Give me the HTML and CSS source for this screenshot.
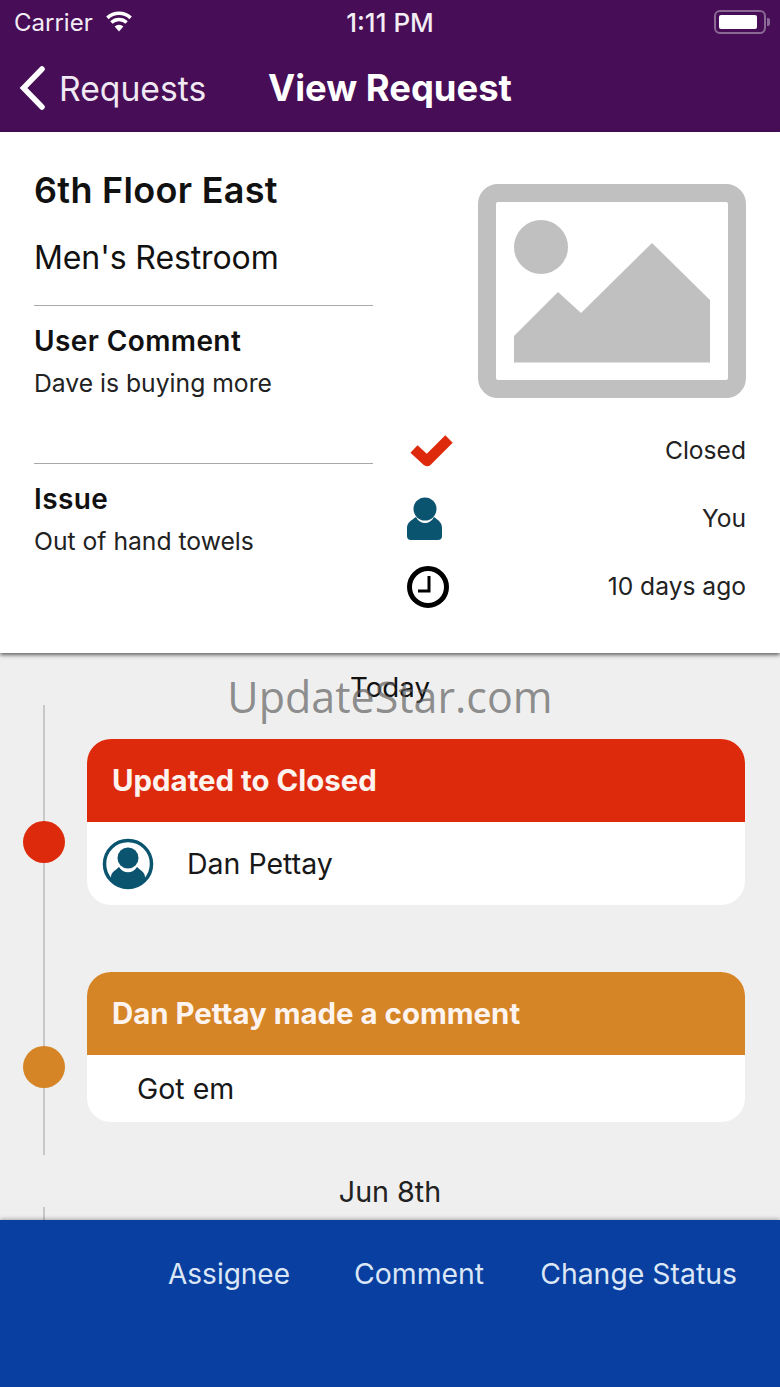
FILE: index.html
```html
<!DOCTYPE html>
<html>
  <head>
    <meta charset="utf-8">
    <title>View Request</title>
    <link rel="stylesheet" href="styles.css">
  </head>
  <body>
    <div class="phone">
      <header class="top">
        <div class="status-bar">
          <div class="carrier">
            Carrier
            <svg class="wifi" width="28" height="22" viewBox="0 0 28 22">
              <path d="M14 21.5 L9.6 16.4 A6.6 6.6 0 0 1 18.4 16.4 Z" fill="#fff"/>
              <path d="M6.4 12.4 A11.2 11.2 0 0 1 21.6 12.4" fill="none" stroke="#fff" stroke-width="3.4"/>
              <path d="M2.4 7.8 A17.2 17.2 0 0 1 25.6 7.8" fill="none" stroke="#fff" stroke-width="3.6"/>
            </svg>
          </div>
          <div class="clock">1:11 PM</div>
          <div class="battery"><span class="battery-level"></span></div>
        </div>
        <nav class="nav">
          <div class="back">
            <svg width="28" height="44" viewBox="0 0 28 44">
              <path d="M24 3 L5.5 22 L24 41" fill="none" stroke="#fff" stroke-width="5.5" stroke-linecap="round" stroke-linejoin="miter"/>
            </svg>
            <span>Requests</span>
          </div>
          <div class="nav-title">View Request</div>
        </nav>
      </header>

      <section class="details">
        <div class="details-left">
          <h1 class="place">6th Floor East</h1>
          <div class="room">Men's Restroom</div>
          <div class="info info-comment">
            <div class="info-label">User Comment</div>
            <div class="info-text">Dave is buying more</div>
          </div>
          <div class="info">
            <div class="info-label">Issue</div>
            <div class="info-text">Out of hand towels</div>
          </div>
        </div>
        <div class="details-right">
          <svg class="photo" width="268" height="214" viewBox="0 0 268 214">
            <rect x="9" y="9" width="250" height="196" rx="11" fill="none" stroke="#c0c0c0" stroke-width="18"/>
            <circle cx="63" cy="63" r="27" fill="#c0c0c0"/>
            <path d="M36 152 L80 108 L103 129 L174 59 L232 116 L232 178.5 L36 178.5 Z" fill="#c0c0c0"/>
          </svg>
          <div class="meta meta-status">
            <svg width="50" height="40" viewBox="0 0 50 40">
              <path d="M8 19 L21 31 L43 9" fill="none" stroke="#de2a0c" stroke-width="10.5" stroke-linejoin="round"/>
            </svg>
            <span>Closed</span>
          </div>
          <div class="meta">
            <svg width="46" height="46" viewBox="0 0 46 46">
              <circle cx="19" cy="14" r="11.5" fill="#0b5470"/>
              <path d="M1 41 L1 33 C1 27 6 25 10 22 C14 30 24 30 28 22 C32 25 36 27 36 33 L36 41 Q36 45 32 45 L5 45 Q1 45 1 41 Z" fill="#0b5470"/>
            </svg>
            <span>You</span>
          </div>
          <div class="meta">
            <svg width="46" height="44" viewBox="0 0 46 44">
              <circle cx="22" cy="23" r="18.5" fill="none" stroke="#000" stroke-width="5"/>
              <path d="M23 12 L23 27 L12 27" fill="none" stroke="#000" stroke-width="3"/>
            </svg>
            <span>10 days ago</span>
          </div>
        </div>
      </section>

      <main class="timeline">
        <div class="date date-today">Today</div>
        <div class="rail">
          <div class="event event-closed">
            <span class="dot"></span>
            <div class="event-head">Updated to Closed</div>
            <div class="event-body event-user">
              <svg width="52" height="52" viewBox="0 0 52 52">
                <defs><clipPath id="avatar"><circle cx="26" cy="26" r="23"/></clipPath></defs>
                <circle cx="26" cy="26" r="23.5" fill="#fff" stroke="#0b5470" stroke-width="3.5"/>
                <circle cx="26" cy="20" r="10.5" fill="#0b5470"/>
                <path d="M9 52 L9 39 C9 34 14 32 17 29 C21 36 31 36 35 29 C38 32 43 34 43 39 L43 52 Z" fill="#0b5470" clip-path="url(#avatar)"/>
              </svg>
              <span>Dan Pettay</span>
            </div>
          </div>
          <div class="event event-comment">
            <span class="dot"></span>
            <div class="event-head">Dan Pettay made a comment</div>
            <div class="event-body event-note">Got em</div>
          </div>
        </div>
        <div class="date">Jun 8th</div>
        <div class="rail rail-next"></div>
      </main>

      <footer class="actions">
        <span class="action-first">Assignee</span>
        <span>Comment</span>
        <span>Change Status</span>
      </footer>

      <div class="watermark">UpdateStar.com</div>
    </div>
  </body>
</html>
```

FILE: styles.css
```css
* {
  box-sizing: border-box;
}

html,
body {
  margin: 0;
  padding: 0;
}

body {
  font-family: Inter, "Noto Sans", sans-serif;
  color: #111;
}

.phone {
  position: relative;
  width: 780px;
  height: 1387px;
  display: flex;
  flex-direction: column;
  overflow: hidden;
  background: #efefef;
}

/* header */
.top {
  height: 132px;
  background: #470d56;
  color: #fff;
}

.status-bar {
  height: 44px;
  display: grid;
  grid-template-columns: 1fr auto 1fr;
  align-items: center;
  padding: 0 14px;
  font-size: 24px;
  color: #f3ecf5;
}

.carrier {
  display: flex;
  align-items: center;
  gap: 12px;
}

.wifi {
  margin-top: -2px;
}

.clock {
  font-size: 26px;
  font-weight: 500;
}

.battery {
  justify-self: end;
  position: relative;
  width: 52px;
  height: 24px;
  border: 2px solid #8a6a95;
  border-radius: 6px;
  padding: 3px;
}

.battery::after {
  content: "";
  position: absolute;
  right: -6px;
  top: 6px;
  width: 3px;
  height: 8px;
  background: #8a6a95;
  border-radius: 0 2px 2px 0;
}

.battery-level {
  display: block;
  width: 38px;
  height: 14px;
  background: #fff;
  border-radius: 2px;
}

.nav {
  height: 88px;
  display: flex;
  align-items: center;
  padding-left: 18px;
}

.back {
  display: flex;
  align-items: center;
  gap: 13px;
  width: 250px;
  font-size: 33.7px;
  color: #f0e8f2;
}

.nav-title {
  font-size: 36.4px;
  font-weight: 700;
}

/* request details */
.details {
  height: 521px;
  display: flex;
  justify-content: space-between;
  padding: 0 34px;
  background: #fff;
  box-shadow: 0 2px 4px rgba(0, 0, 0, 0.6);
  position: relative;
}

.details-left {
  width: 339px;
  padding-top: 37px;
}

.place {
  margin: 0;
  font-size: 36px;
  line-height: 42px;
  font-weight: 600;
  letter-spacing: 0.3px;
}

.room {
  margin-top: 27px;
  font-size: 32px;
  line-height: 40px;
  font-weight: 400;
  letter-spacing: -0.1px;
}

.info {
  border-top: 1px solid #a9a9a9;
  padding-top: 18px;
}

.info-comment {
  height: 158px;
  margin-top: 27px;
}

.info-label {
  font-size: 28px;
  line-height: 34px;
  font-weight: 600;
  letter-spacing: 0.4px;
}

.info-text {
  margin-top: 10px;
  font-size: 24.7px;
  line-height: 30px;
  color: #222;
}

.details-right {
  width: 340px;
  display: flex;
  flex-direction: column;
  align-items: flex-end;
  padding-top: 52px;
}

.photo {
  display: block;
}

.meta {
  width: 100%;
  height: 68px;
  display: flex;
  align-items: center;
  justify-content: space-between;
  font-size: 24.6px;
  color: #222;
}

.meta-status {
  margin-top: 18px;
}

/* timeline */
.timeline {
  flex: 1;
  min-height: 0;
  overflow: hidden;
}

.date {
  height: 52px;
  padding-top: 20px;
  display: flex;
  align-items: center;
  justify-content: center;
  font-size: 28.7px;
  color: #222;
}

.date-today {
  padding-top: 16px;
  font-size: 27.7px;
  color: #111;
}

.rail {
  margin-left: 43px;
  border-left: 2px solid #c8c8c8;
  padding: 34px 35px 33px 42px;
  display: flex;
  flex-direction: column;
  gap: 67px;
}

.rail-next {
  padding: 0;
  height: 20px;
}

.event {
  position: relative;
  background: #fff;
  border-radius: 24px;
}

.dot {
  position: absolute;
  left: -64px;
  top: calc(50% - 1px);
  width: 42px;
  height: 42px;
  border-radius: 50%;
}

.event-head {
  height: 83px;
  display: flex;
  align-items: center;
  padding-left: 25px;
  border-radius: 24px 24px 0 0;
  color: #fdf3ef;
  font-size: 29.4px;
  font-weight: 700;
}

.event-closed .event-head,
.event-closed .dot {
  background: #de2a0c;
}

.event-comment .event-head,
.event-comment .dot {
  background: #d58426;
}

.event-body {
  display: flex;
  align-items: center;
  font-size: 28.5px;
  color: #181818;
}

.event-user {
  height: 83px;
  padding-left: 15px;
  gap: 33px;
}

.event-note {
  height: 67px;
  padding-left: 50px;
}

/* bottom actions */
.actions {
  height: 167px;
  flex-shrink: 0;
  position: relative;
  display: flex;
  justify-content: flex-end;
  gap: 56px;
  padding: 36px 43px 0 0;
  background: #083fa0;
  box-shadow: 0 -1px 4px rgba(0, 0, 0, 0.3);
  color: #dbe6f6;
  font-size: 28.4px;
  line-height: 36px;
}

.action-first {
  font-size: 28px;
  margin-right: 8px;
}

.watermark {
  position: absolute;
  left: 0;
  right: 0;
  top: 668px;
  text-align: center;
  font-family: "Open Sans", sans-serif;
  font-size: 43px;
  line-height: 58px;
  color: rgba(90, 90, 90, 0.68);
}
```
